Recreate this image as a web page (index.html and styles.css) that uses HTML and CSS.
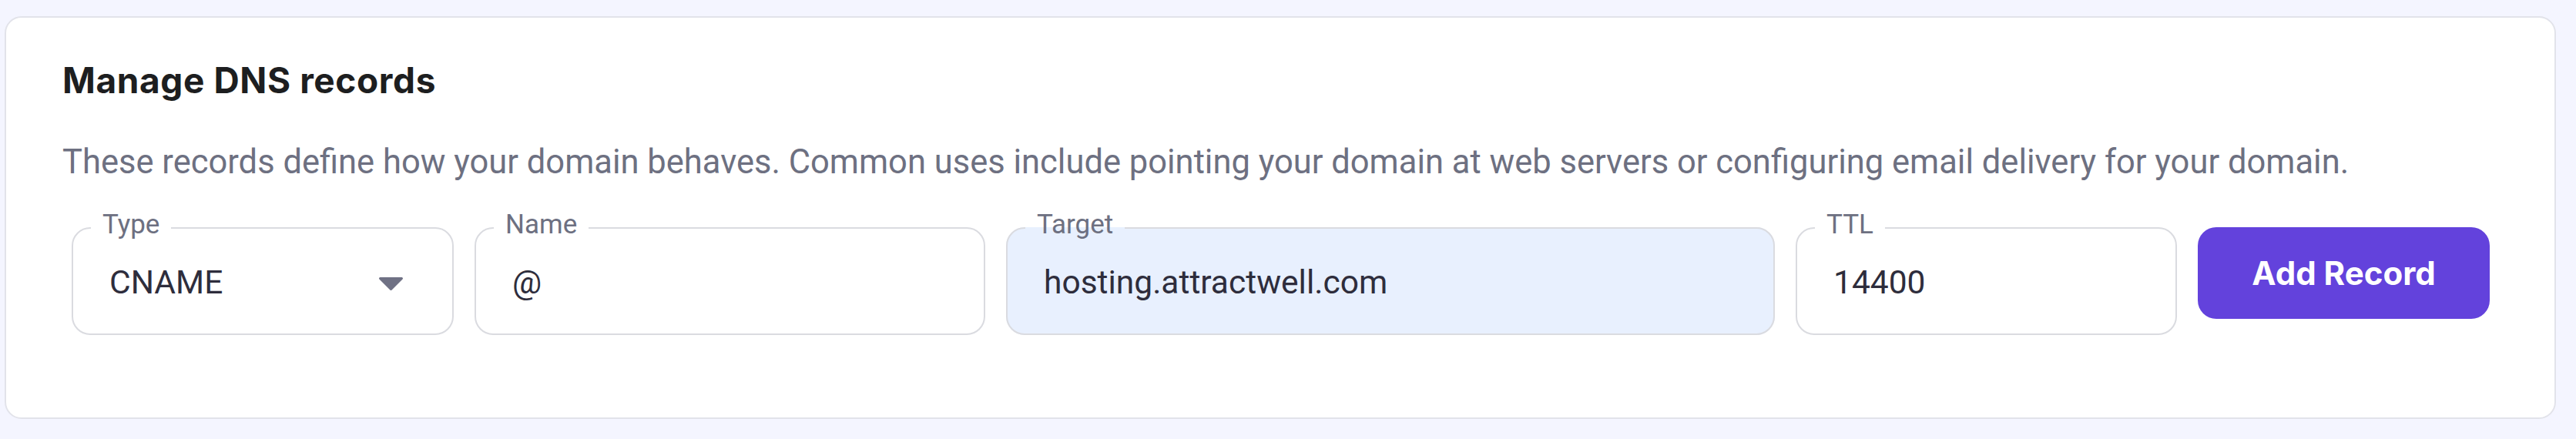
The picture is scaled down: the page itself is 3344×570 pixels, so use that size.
FILE: index.html
```html
<!DOCTYPE html>
<html lang="en">
<head>
<meta charset="utf-8">
<title>Manage DNS records</title>
<link rel="stylesheet" href="styles.css">
</head>
<body>
<main class="page">
  <section class="card">
    <h2 class="card-title">Manage DNS records</h2>
    <p class="card-desc">These records define how your domain behaves. Common uses include pointing your domain at web servers or configuring email delivery for your domain.</p>
    <form class="record-row">
      <fieldset class="field field-type">
        <legend class="field-label">Type</legend>
        <div class="control">
          <span class="value">CNAME</span>
          <svg class="caret" width="31" height="17" viewBox="0 0 31 17" aria-hidden="true"><path d="M1.5 0h28a1.5 1.5 0 0 1 1.1 2.5L16.6 16.4a1.5 1.5 0 0 1-2.2 0L0.4 2.5A1.5 1.5 0 0 1 1.5 0z" fill="#6f7184"/></svg>
        </div>
      </fieldset>
      <fieldset class="field field-name">
        <legend class="field-label">Name</legend>
        <div class="control"><span class="value">@</span></div>
      </fieldset>
      <fieldset class="field field-target is-filled">
        <legend class="field-label">Target</legend>
        <div class="control"><span class="value">hosting.attractwell.com</span></div>
      </fieldset>
      <fieldset class="field field-ttl">
        <legend class="field-label">TTL</legend>
        <div class="control"><span class="value">14400</span></div>
      </fieldset>
      <button type="button" class="btn-add">Add Record</button>
    </form>
  </section>
</main>
</body>
</html>
```

FILE: styles.css
```css
* { box-sizing: border-box; }

html, body {
  margin: 0;
  background: #f4f5ff;
}

.page {
  padding: 21px 26px 24px 6px;
}

.card {
  background: #ffffff;
  border: 2px solid #e2e3ea;
  border-radius: 22px;
  padding: 53px 40px 107px 73px;
}

.card-title {
  margin: 0;
  font-family: "Inter", "DejaVu Sans", sans-serif;
  font-weight: 700;
  font-size: 46px;
  line-height: 56px;
  letter-spacing: 0.6px;
  color: #1d1e20;
}

.card-desc {
  margin: 53px 0 0;
  font-family: "Roboto", "Liberation Sans", sans-serif;
  font-size: 43.5px;
  line-height: 52px;
  color: #6d7081;
}

.record-row {
  display: flex;
  align-items: flex-start;
  gap: 27px;
  margin: 38px 0 0 12px;
}

.field {
  margin: 0;
  min-width: 0;
  border: 2px solid #dadbe0;
  border-radius: 24px;
  padding: 26px 20px 42px 47px;
  background: #ffffff;
}

.field-type { width: 496px; padding-right: 64px; }
.field-name { width: 663px; }
.field-target { width: 998px; }
.field-ttl { width: 495px; }

.field.is-filled {
  background: #e8f0fe;
}

.field-label {
  margin-left: -24px;
  padding: 0 15px 8px;
  font-family: "Roboto", "Liberation Sans", sans-serif;
  font-size: 35px;
  line-height: 34px;
  color: #6d7081;
}

.control {
  display: flex;
  align-items: center;
  justify-content: space-between;
  height: 48px;
}

.value {
  font-family: "Roboto", "Liberation Sans", sans-serif;
  font-size: 42.5px;
  line-height: 48px;
  color: #2e2d3c;
  white-space: nowrap;
}

.caret {
  flex: 0 0 auto;
  margin-top: 2px;
}

.btn-add {
  flex: 0 0 379px;
  height: 119px;
  margin-top: 20px;
  border: 0;
  border-radius: 24px;
  background: #6342dc;
  color: #ffffff;
  font-family: "Inter", "DejaVu Sans", sans-serif;
  font-weight: 700;
  font-size: 42px;
  line-height: 1;
  padding: 0;
  cursor: pointer;
}
```
